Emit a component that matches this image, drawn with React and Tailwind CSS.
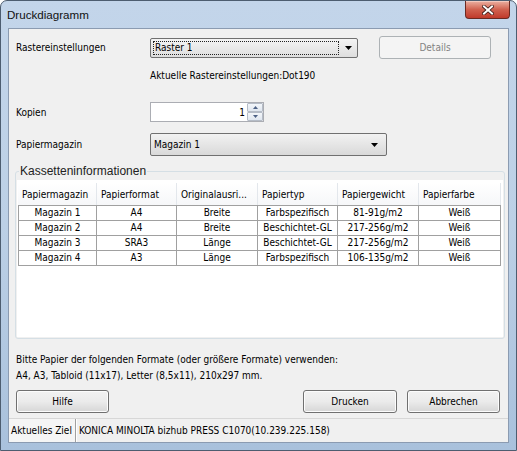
import React from 'react';

const rows = [
  ['Magazin 1', 'A4', 'Breite', 'Farbspezifisch', '81-91g/m2', 'Weiß'],
  ['Magazin 2', 'A4', 'Breite', 'Beschichtet-GL', '217-256g/m2', 'Weiß'],
  ['Magazin 3', 'SRA3', 'Länge', 'Beschichtet-GL', '217-256g/m2', 'Weiß'],
  ['Magazin 4', 'A3', 'Länge', 'Farbspezifisch', '106-135g/m2', 'Weiß'],
];

const headers = ['Papiermagazin', 'Papierformat', 'Originalausri...', 'Papiertyp', 'Papiergewicht', 'Papierfarbe'];

function Arrow() {
  return (
    <svg width="7" height="4" viewBox="0 0 7 4">
      <path d="M0 0h7L3.5 4z" fill="#000" />
    </svg>
  );
}

function Button({ children, className }) {
  return (
    <div className={`h-[23px] rounded-[3px] border border-[#707070] bg-linear-to-b from-[#f2f2f2] via-[#ebebeb] to-[#d6d6d6] shadow-[inset_0_0_0_1px_#fcfcfc] flex items-center justify-center ${className}`}>
      {children}
    </div>
  );
}

export default function App() {
  return (
    <div className="w-[517px] h-[451px] overflow-hidden font-['DejaVu_Sans_Condensed','DejaVu_Sans',sans-serif] text-[10px] text-black">
      {/* window frame */}
      <div className="w-[517px] h-[451px] rounded-t-[7px] border border-[#4d5d70] bg-linear-to-b from-[#c3d5ea] via-[#bcd0e6] to-[#a9c1dc] flex flex-col">
        {/* title bar */}
        <div className="h-[27px] flex justify-between items-start shrink-0">
          <span className="pl-[6px] pt-[5px] font-['Liberation_Sans',sans-serif] text-[11.6px] text-[#111]">Druckdiagramm</span>
          <div className="mr-[6px] w-[45px] h-[18px] rounded-b-[4px] border border-t-0 border-[#6b2a22] bg-linear-to-b from-[#eab0a2] via-[#d0614f] to-[#c0392b] flex items-center justify-center shadow-[inset_0_1px_0_#f3c8bd]">
            <svg width="12" height="10" viewBox="0 0 12 10">
              <path d="M2 1.5l8 7M10 1.5l-8 7" stroke="#3a1a16" strokeWidth="3.6" strokeLinecap="square" />
              <path d="M2 1.5l8 7M10 1.5l-8 7" stroke="#fff" strokeWidth="2" strokeLinecap="square" />
            </svg>
          </div>
        </div>

        {/* client area */}
        <div className="ml-[7px] w-[501px] h-[415px] border border-[#8b9bb1] bg-[#f0f0f0] flex flex-col">
          {/* Rastereinstellungen */}
          <div className="mt-[7px] h-[23px] flex items-center pl-[7px]">
            <span className="w-[134px]">Rastereinstellungen</span>
            <div className="w-[208px] h-[20px] rounded-[2px] border border-[#707070] bg-linear-to-b from-[#f4f4f4] to-[#dedede] flex items-center pl-[2px] pr-[5px]">
              <div className="flex-1 h-[14px] border border-dotted border-[#222] flex items-center pl-[1px] mr-[6px]">Raster 1</div>
              <Arrow />
            </div>
            <div className="ml-[21px] w-[112px] h-[23px] rounded-[3px] border border-[#adb2b5] bg-[#f4f4f4] flex items-center justify-center text-[#838383]">Details</div>
          </div>

          <div className="mt-[9px] h-[14px] pl-[141px] flex items-center">Aktuelle Rastereinstellungen:Dot190</div>

          {/* Kopien */}
          <div className="mt-[20px] h-[20px] flex items-center pl-[7px]">
            <span className="w-[134px]">Kopien</span>
            <div className="w-[114px] h-[20px] border border-[#abadb3] bg-white flex items-center">
              <span className="flex-1 text-right pr-[2px]">1</span>
              <div className="w-[16px] h-[18px] flex flex-col">
                <div className="h-[9px] border border-[#b5bcc7] rounded-[1px] bg-linear-to-b from-[#f3f6fa] to-[#dfe6ef] flex items-center justify-center">
                  <svg width="5" height="3" viewBox="0 0 5 3"><path d="M0 3h5L2.5 0z" fill="#4d6185" /></svg>
                </div>
                <div className="h-[9px] border border-[#b5bcc7] rounded-[1px] bg-linear-to-b from-[#f3f6fa] to-[#dfe6ef] flex items-center justify-center">
                  <svg width="5" height="3" viewBox="0 0 5 3"><path d="M0 0h5L2.5 3z" fill="#4d6185" /></svg>
                </div>
              </div>
            </div>
          </div>

          {/* Papiermagazin */}
          <div className="mt-[11px] h-[23px] flex items-center pl-[7px]">
            <span className="w-[134px]">Papiermagazin</span>
            <div className="w-[237px] h-[23px] rounded-[2px] border border-[#707070] bg-linear-to-b from-[#f2f2f2] to-[#d9d9d9] flex items-center pl-[3px] pr-[8px]">
              <span className="flex-1">Magazin 1</span>
              <Arrow />
            </div>
          </div>

          {/* Kassetteninformationen */}
          <fieldset className="mt-[8px] ml-[6px] w-[490px] h-[175px] rounded-[3px] border border-[#d5dfe5] px-[1px] pb-[1px]">
            <legend className="ml-[2px] px-[1px] font-['Liberation_Sans',sans-serif] text-[12px] text-[#222] leading-[14px]">Kassetteninformationen</legend>
            <div className="mt-[2px] h-[157px] bg-white pt-[3px] pl-[1px]">
              <div className="grid grid-cols-[79px_80px_81px_80px_81px_82px] h-[22px]">
                {headers.map((h) => (
                  <div key={h} className="border-r border-[#e3e7ec] bg-linear-to-b from-[#ffffff] to-[#f6f7f9] flex items-center pl-[4px] whitespace-nowrap overflow-hidden">{h}</div>
                ))}
              </div>
              <div className="border-t border-l border-[#a0a0a0] w-[483px]">
                {rows.map((r, i) => (
                  <div key={i} className="grid grid-cols-[78px_80px_81px_80px_81px_82px] h-[15px]">
                    {r.map((c, j) => (
                      <div key={j} className="border-r border-b border-[#a0a0a0] shadow-[inset_1px_1px_0_#fff] flex items-center justify-center leading-none">{c}</div>
                    ))}
                  </div>
                ))}
              </div>
            </div>
          </fieldset>

          <div className="mt-[13px] pl-[7px] leading-[16px]">
            <p>Bitte Papier der folgenden Formate (oder größere Formate) verwenden:</p>
            <p>A4, A3, Tabloid (11x17), Letter (8,5x11), 210x297 mm.</p>
          </div>

          <div className="mt-[6px] flex pl-[7px]">
            <Button className="w-[93px]">Hilfe</Button>
            <Button className="ml-auto w-[94px]">Drucken</Button>
            <Button className="ml-[10px] mr-[8px] w-[93px]">Abbrechen</Button>
          </div>

          {/* status bar */}
          <div className="mt-auto h-[24px] border-t border-[#d7d7d7] flex items-center">
            <div className="h-full flex items-center pl-[2px] pr-[3px] border-r border-[#a0a0a0] shadow-[1px_0_0_#fff] bg-[#f5f5f5]">Aktuelles Ziel</div>
            <div className="pl-[3px]">KONICA MINOLTA bizhub PRESS C1070(10.239.225.158)</div>
          </div>
        </div>
      </div>
    </div>
  );
}
